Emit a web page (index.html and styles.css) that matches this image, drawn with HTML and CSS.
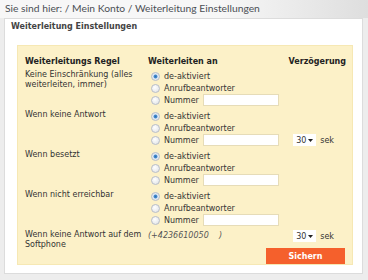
FILE: index.html
```html
<!DOCTYPE html>
<html lang="de">
<head>
  <meta charset="UTF-8" />
  <title>Weiterleitung Einstellungen</title>
  <link rel="stylesheet" href="styles.css">
</head>
<body>
  <div class="breadcrumb">Sie sind hier: / Mein Konto / Weiterleitung Einstellungen</div>

  <div class="panel">
    <h3 class="panel-title">Weiterleitung Einstellungen</h3>

    <div class="box">
      <table class="rules">
        <tr class="head">
          <th class="col-rule">Weiterleitungs Regel</th>
          <th class="col-target">Weiterleiten an</th>
          <th class="col-delay">Verzögerung</th>
        </tr>

        <tr>
          <td class="label">Keine Einschränkung (alles weiterleiten, immer)</td>
          <td>
            <label class="opt"><input type="radio" name="r1" checked> de-aktiviert</label>
            <label class="opt"><input type="radio" name="r1"> Anrufbeantworter</label>
            <label class="opt"><input type="radio" name="r1"> Nummer <input type="text" class="num"></label>
          </td>
          <td></td>
        </tr>

        <tr>
          <td class="label">Wenn keine Antwort</td>
          <td>
            <label class="opt"><input type="radio" name="r2" checked> de-aktiviert</label>
            <label class="opt"><input type="radio" name="r2"> Anrufbeantworter</label>
            <label class="opt"><input type="radio" name="r2"> Nummer <input type="text" class="num"></label>
          </td>
          <td class="delay-cell">
            <span class="delay"><span class="sel">30 <svg width="5" height="3" viewBox="0 0 5 3"><path d="M0 0h5L2.5 3z" fill="#222"/></svg></span> sek</span>
          </td>
        </tr>

        <tr>
          <td class="label">Wenn besetzt</td>
          <td>
            <label class="opt"><input type="radio" name="r3" checked> de-aktiviert</label>
            <label class="opt"><input type="radio" name="r3"> Anrufbeantworter</label>
            <label class="opt"><input type="radio" name="r3"> Nummer <input type="text" class="num"></label>
          </td>
          <td></td>
        </tr>

        <tr>
          <td class="label">Wenn nicht erreichbar</td>
          <td>
            <label class="opt"><input type="radio" name="r4" checked> de-aktiviert</label>
            <label class="opt"><input type="radio" name="r4"> Anrufbeantworter</label>
            <label class="opt"><input type="radio" name="r4"> Nummer <input type="text" class="num"></label>
          </td>
          <td></td>
        </tr>

        <tr class="last">
          <td class="label">Wenn keine Antwort auf dem Softphone</td>
          <td class="phone">(+4236610050&nbsp;&nbsp;&nbsp;&nbsp;)</td>
          <td>
            <span class="delay"><span class="sel">30 <svg width="5" height="3" viewBox="0 0 5 3"><path d="M0 0h5L2.5 3z" fill="#222"/></svg></span> sek</span>
          </td>
        </tr>
      </table>

      <div class="actions">
        <button class="save">Sichern</button>
      </div>
    </div>
  </div>
</body>
</html>
```

FILE: styles.css
```css
body {
  margin: 0;
  background-color: #ededed;
  font-family: 'DejaVu Sans', Verdana, sans-serif;
  color: #333;
}

.breadcrumb {
  height: 18px;
  padding-left: 5px;
  font-family: Lato, 'Open Sans', sans-serif;
  font-size: 10.3px;
  line-height: 17px;
  color: #4b4f55;
  background: linear-gradient(to right, #f7f7f7 60%, #dedede);
}

.panel {
  margin: 0 5px 0 4px;
  height: 256px;
  background-color: #fff;
  border: 1px solid #dcdcdc;
  box-sizing: border-box;
  padding: 0 9px 0 12px;
}

.panel-title {
  margin: 0 0 0 -6px;
  padding-top: 2px;
  height: 26px;
  box-sizing: border-box;
  font-size: 8px;
  line-height: 12px;
  font-weight: bold;
  color: #444;
}

.box {
  background-color: #fcf1c8;
  border: 1px solid #f6e8b4;
  height: 220px;
  box-sizing: border-box;
  padding: 10px 6px 0 7px;
}

.rules {
  width: 100%;
  border-collapse: collapse;
  font-size: 8px;
}

.rules th {
  text-align: left;
  font-weight: bold;
  color: #222;
  padding: 0 0 4px;
  height: 10px;
}

.rules th.col-delay {
  text-align: right;
}

.col-rule {
  width: 123px;
}

.rules td {
  vertical-align: top;
  padding: 0 0 4px;
}

.label {
  line-height: 10px;
  padding-right: 2px !important;
}

.opt {
  display: flex;
  align-items: center;
  height: 12px;
  padding-left: 3px;
  gap: 3px;
  white-space: nowrap;
}

.opt input[type="radio"] {
  appearance: none;
  margin: 0 1px 0 0;
  width: 9px;
  height: 9px;
  border-radius: 50%;
  border: 1px solid #b9bec6;
  background: radial-gradient(circle at 40% 35%, #fff, #dde0e4);
  box-sizing: border-box;
}

.opt input[type="radio"]:checked {
  background: radial-gradient(circle, #2a6fb5 0, #4a8fd0 1.6px, #e8eef5 2.4px, #d9dde3 100%);
}

.num {
  width: 76px;
  height: 12px;
  margin: 0 0 0 1px;
  padding: 0;
  border: 1px solid #e6dcb8;
  background: #fff;
  box-sizing: border-box;
}

.delay-cell {
  padding-top: 24px !important;
}

.delay {
  display: flex;
  align-items: center;
  justify-content: flex-end;
  gap: 4px;
  padding-right: 12px;
}

.sel {
  display: inline-flex;
  align-items: center;
  justify-content: space-between;
  width: 23px;
  height: 12px;
  padding: 0 3px 0 3px;
  box-sizing: border-box;
  background: #fff;
  font-size: 8px;
}

.phone {
  font-style: italic;
  color: #555;
  padding-top: 1px !important;
}

.last td {
  padding-bottom: 0;
}

.actions {
  display: flex;
  justify-content: flex-end;
  margin-top: -2px;
  padding-right: 1px;
}

.save {
  width: 79px;
  height: 16px;
  border: none;
  background-color: #f5602c;
  color: #fff;
  font-family: 'DejaVu Sans', Verdana, sans-serif;
  font-size: 8px;
  font-weight: bold;
  padding: 0;
}
```
